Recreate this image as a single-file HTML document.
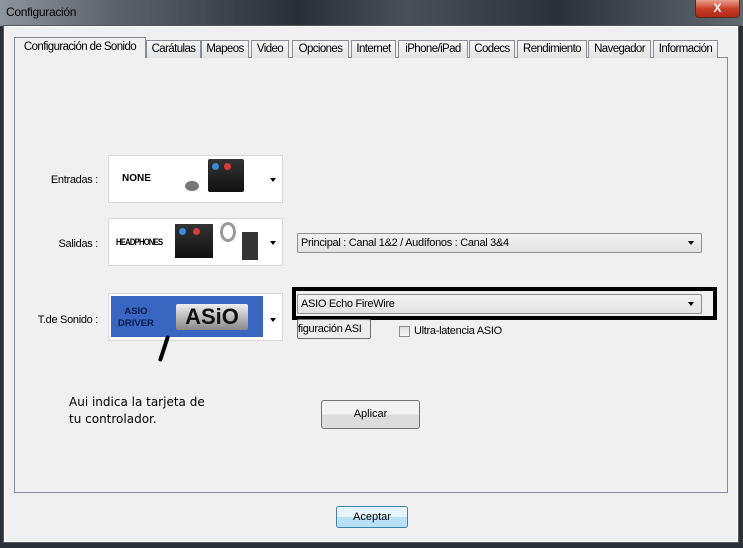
<!DOCTYPE html>
<html><head><meta charset="utf-8"><style>
*{margin:0;padding:0;box-sizing:border-box}
body{width:743px;height:548px;overflow:hidden;background:#2a3038;font-family:"Liberation Sans",sans-serif;font-size:11px;color:#000;position:relative}
.a{position:absolute}
.title{left:0;top:0;width:743px;height:26px;background:linear-gradient(90deg,#8d949c 0%,#5d646c 15%,#2a2f36 40%,#4a5058 55%,#2c3138 75%,#606870 100%)}
.dlg{left:3px;top:25px;width:736px;height:518px;background:#f0f0f0;border:1px solid #555;box-shadow:inset 0 0 0 1px #fff}
.tab{position:absolute;top:40px;height:18px;border:1px solid #898c95;border-bottom:none;background:linear-gradient(#f6f6f6,#e3e3e3);font-size:11.5px;text-align:center;line-height:16px;white-space:nowrap;overflow:hidden;letter-spacing:-0.6px}
.panel{left:14px;top:57px;width:714px;height:436px;border:1px solid #898c95;background:#f0f0f0}
.img{position:absolute;background:#fff;border:1px solid #d8d8d8}
.arr{position:absolute;width:0;height:0;border-left:3.5px solid transparent;border-right:3.5px solid transparent;border-top:4px solid #000}
.combo{position:absolute;height:20px;border:1px solid #8e8f8f;border-radius:2px;background:linear-gradient(#f2f2f2,#e2e2e2);font-size:11px;line-height:18px;padding-left:3px;letter-spacing:-0.3px}
.lbl{position:absolute;font-size:11px;text-align:right;letter-spacing:-0.3px}
</style></head><body>
<div class="a title"></div>
<div class="a" style="left:6px;top:5px;color:#000;font-size:12px;letter-spacing:-0.3px">Configuración</div>
<div class="a" style="left:695px;top:0;width:45px;height:18px;border:1px solid #5a2a20;border-top:none;border-radius:0 0 4px 4px;background:linear-gradient(#e8a090,#c8402a 50%,#b02a18);color:#fff;font-weight:bold;text-align:center;font-size:12px;line-height:16px">X</div>
<div class="a dlg"></div>
<div class="a panel"></div>
<div class="tab" style="left:14px;top:37px;width:132px;height:21px;background:#f0f0f0;line-height:19px">Configuración de Sonido</div>
<div class="tab" style="left:146px;width:55px">Carátulas</div>
<div class="tab" style="left:201px;width:48px">Mapeos</div>
<div class="tab" style="left:251px;width:38px">Video</div>
<div class="tab" style="left:292px;width:57px">Opciones</div>
<div class="tab" style="left:351px;width:45px">Internet</div>
<div class="tab" style="left:398px;width:70px">iPhone/iPad</div>
<div class="tab" style="left:469px;width:46px">Codecs</div>
<div class="tab" style="left:517px;width:70px">Rendimiento</div>
<div class="tab" style="left:588px;width:63px">Navegador</div>
<div class="tab" style="left:653px;width:65px">Información</div>

<div class="lbl" style="left:30px;top:174px;width:68px">Entradas :</div>
<div class="lbl" style="left:30px;top:238px;width:68px">Salidas :</div>
<div class="lbl" style="left:20px;top:314px;width:78px">T.de Sonido :</div>

<div class="img" style="left:108px;top:155px;width:175px;height:48px"></div>
<div class="a" style="left:122px;top:173px;font-weight:bold;font-size:10px">NONE</div>
<div class="a" style="left:208px;top:159px;width:36px;height:33px;background:linear-gradient(#333,#111);border-radius:2px"></div>
<div class="a" style="left:212px;top:163px;width:7px;height:7px;border-radius:50%;background:#3a8ad8"></div>
<div class="a" style="left:224px;top:163px;width:7px;height:7px;border-radius:50%;background:#d83a3a"></div>
<div class="a" style="left:185px;top:181px;width:14px;height:10px;border-radius:50%;background:#777"></div>
<div class="arr" style="left:270px;top:178px"></div>

<div class="img" style="left:108px;top:218px;width:175px;height:48px"></div>
<div class="a" style="left:116px;top:237px;font-weight:bold;font-size:9px;letter-spacing:-0.9px;transform:scaleX(0.85);transform-origin:left">HEADPHONES</div>
<div class="a" style="left:175px;top:224px;width:38px;height:34px;background:linear-gradient(#333,#111)"></div>
<div class="a" style="left:179px;top:228px;width:7px;height:7px;border-radius:50%;background:#3a8ad8"></div>
<div class="a" style="left:193px;top:228px;width:7px;height:7px;border-radius:50%;background:#d83a3a"></div>
<div class="a" style="left:220px;top:222px;width:16px;height:20px;border:3px solid #999;border-radius:50%"></div>
<div class="a" style="left:242px;top:232px;width:16px;height:28px;background:#333"></div>
<div class="arr" style="left:270px;top:241px"></div>

<div class="img" style="left:108px;top:293px;width:175px;height:48px"></div>
<div class="a" style="left:111px;top:296px;width:152px;height:41px;background:#3866c0"></div>
<div class="a" style="left:118px;top:306px;font-weight:bold;font-size:9.5px;color:#0a1a50;text-align:center;line-height:12px">ASIO<br>DRIVER</div>
<div class="a" style="left:176px;top:304px;width:72px;height:26px;background:linear-gradient(#eee,#888);border-radius:2px;font-weight:bold;font-size:22px;line-height:26px;text-align:center;color:#111">ASiO</div>
<div class="arr" style="left:270px;top:318px"></div>
<div class="a" style="left:162px;top:335px;width:4px;height:27px;background:#000;transform:rotate(18deg);border-radius:2px"></div>

<div class="combo" style="left:297px;top:233px;width:405px">Principal : Canal 1&amp;2 / Audífonos : Canal 3&amp;4</div>
<div class="arr" style="left:688px;top:241px"></div>
<div class="a" style="left:292px;top:287px;width:425px;height:33px;border:4px solid #000"></div>
<div class="combo" style="left:297px;top:294px;width:405px">ASIO Echo FireWire</div>
<div class="arr" style="left:688px;top:302px"></div>
<div class="a" style="left:297px;top:319px;width:74px;height:20px;border:1px solid #707070;border-radius:2px;background:#ececec;font-size:11px;line-height:18px;overflow:hidden;white-space:nowrap;text-indent:-6px;letter-spacing:-0.3px">nfiguración ASI</div>
<div class="a" style="left:399px;top:326px;width:11px;height:11px;border:1px solid #8e8f8f;background:linear-gradient(#ddd,#f8f8f8)"></div>
<div class="a" style="left:414px;top:325px;font-size:11px;letter-spacing:-0.3px">Ultra-latencia ASIO</div>

<div class="a" style="left:69px;top:394px;font-family:'DejaVu Sans',sans-serif;font-size:12px;line-height:17px">Aui indica la tarjeta de<br>tu controlador.</div>
<div class="a" style="left:321px;top:400px;width:99px;height:29px;border:1px solid #707070;border-radius:3px;background:linear-gradient(#f2f2f2 50%,#dcdcdc 50%);text-align:center;line-height:27px">Aplicar</div>
<div class="a" style="left:336px;top:506px;width:72px;height:22px;border:1px solid #3c7fb1;border-radius:3px;background:linear-gradient(#e6f5fc 50%,#b8e0f6 50%);text-align:center;line-height:20px">Aceptar</div>
</body></html>
